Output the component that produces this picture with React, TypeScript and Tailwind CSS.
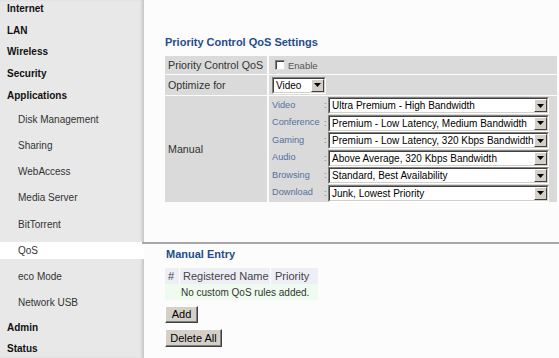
import React from 'react';

type NavItem = { label: string; sub?: boolean; active?: boolean; h: string };

const nav: NavItem[] = [
  { label: 'Internet', h: 'h-[22px]' },
  { label: 'LAN', h: 'h-[22px]' },
  { label: 'Wireless', h: 'h-[21px]' },
  { label: 'Security', h: 'h-[22px]' },
  { label: 'Applications', h: 'h-[22px]' },
  { label: 'Disk Management', sub: true, h: 'h-[26.25px]' },
  { label: 'Sharing', sub: true, h: 'h-[26.25px]' },
  { label: 'WebAccess', sub: true, h: 'h-[26.25px]' },
  { label: 'Media Server', sub: true, h: 'h-[26.25px]' },
  { label: 'BitTorrent', sub: true, h: 'h-[26.25px]' },
  { label: 'QoS', sub: true, active: true, h: 'h-[26.25px]' },
  { label: 'eco Mode', sub: true, h: 'h-[26.25px]' },
  { label: 'Network USB', sub: true, h: 'h-[26.25px]' },
  { label: 'Admin', h: 'h-[22px]' },
  { label: 'Status', h: 'h-[21px]' },
];

const manual = [
  ['Video', 'Ultra Premium - High Bandwidth'],
  ['Conference', 'Premium - Low Latency, Medium Bandwidth'],
  ['Gaming', 'Premium - Low Latency, 320 Kbps Bandwidth'],
  ['Audio', 'Above Average, 320 Kbps Bandwidth'],
  ['Browsing', 'Standard, Best Availability'],
  ['Download', 'Junk, Lowest Priority'],
];

const Arrow = () => (
  <span className="flex h-full w-[13px] shrink-0 items-center justify-center border-t border-l border-t-white border-l-white border-r border-b border-r-[#404040] border-b-[#404040] bg-[#d4d0c8]">
    <svg width="7" height="4" viewBox="0 0 7 4">
      <path d="M0 0h7L3.5 4z" fill="#000" />
    </svg>
  </span>
);

const Select = ({ value, className }: { value: string; className: string }) => (
  <div
    className={`flex items-stretch border border-t-[#808080] border-l-[#808080] border-r-white border-b-white bg-white ${className}`}
  >
    <div className="flex min-w-0 flex-1 items-stretch border border-t-[#404040] border-l-[#404040] border-r-[#d4d0c8] border-b-[#d4d0c8]">
      <span className="flex-1 truncate pl-[2px] text-[10px] leading-[13px] text-black">{value}</span>
      <Arrow />
    </div>
  </div>
);

const Btn = ({ label, className }: { label: string; className: string }) => (
  <button
    className={`flex items-center justify-center border border-t-white border-l-white border-r-[#404040] border-b-[#404040] bg-[#d4d0c8] text-[11px] text-black shadow-[inset_-1px_-1px_0_#808080] ${className}`}
  >
    {label}
  </button>
);

export default function App() {
  return (
    <div className="flex h-[358px] w-[559px] overflow-hidden bg-[#fcfcfc] font-['Liberation_Sans',Arial,sans-serif]">
      <aside className="w-[144px] shrink-0 bg-[#e8e8e8] shadow-[inset_-3px_0_3px_-1px_#c4c4c4]">
        <div className="-mt-[3px]">
          {nav.map((item) => (
            <div key={item.label} className={`flex items-center ${item.h}`}>
              {item.sub ? (
                <div
                  className={`flex h-[17px] w-full items-center pl-[18px] text-[10px] text-[#333] ${
                    item.active ? 'w-[149px] bg-white' : ''
                  }`}
                >
                  {item.label}
                </div>
              ) : (
                <div className="pl-[7px] text-[10px] font-bold text-[#111]">{item.label}</div>
              )}
            </div>
          ))}
        </div>
      </aside>

      <main className="flex-1 pt-[35px]">
        <div className="pl-[21px]">
          <h1 className="h-[14px] text-[11px] font-bold leading-[14px] text-[#244c8c]">
            Priority Control QoS Settings
          </h1>

          <div className="mt-[7px] grid w-[388px] grid-cols-[102px_1fr] grid-rows-[18px_20px_106px] gap-x-[2px] gap-y-[1px] text-[10.7px] text-[#333]">
            <div className="flex items-center bg-[#dadada] pl-[3px]">Priority Control QoS</div>
            <div className="flex items-center bg-[#dadada] pl-[6px]">
              <span className="h-[10px] w-[10px] border border-t-[#808080] border-l-[#808080] border-r-[#e0e0e0] border-b-[#e0e0e0] bg-white shadow-[inset_1px_1px_0_#404040]" />
              <span className="ml-[3px] mt-[2px] text-[9.5px] text-[#555]">Enable</span>
            </div>

            <div className="flex items-center bg-[#dadada] pl-[3px]">Optimize for</div>
            <div className="flex items-center bg-[#dadada] pl-[3px]">
              <Select value="Video" className="h-[17px] w-[54px]" />
            </div>

            <div className="flex items-center bg-[#dadada] pl-[3px]">Manual</div>
            <div className="flex flex-col bg-[#dadada] pt-[1px] pl-[3px] pr-[8px]">
              {manual.map(([k, v]) => (
                <div key={k} className="flex h-[17.5px] items-center">
                  <span className="w-[52px] text-[9.2px] text-[#54709c]">{k}</span>
                  <span className="w-[4px] text-[9px] text-[#777]">:</span>
                  <Select value={v} className="h-[17px] flex-1" />
                </div>
              ))}
            </div>
          </div>
        </div>

        <div className="ml-[-2px] mt-[40px] h-[2px] bg-[#a6a6a6] pl-[21px]" />

        <div className="pl-[21px]">
          <h2 className="mt-[3px] h-[14px] pl-[1px] text-[11px] font-bold leading-[14px] text-[#244c8c]">
            Manual Entry
          </h2>

          <div className="mt-[7px] w-[153px]">
            <div className="flex h-[16px] items-center bg-[#eeeef6] text-[11px] text-[#444]">
              <span className="w-[14px] pl-[3px]">#</span>
              <span className="w-[91px] border-l border-white pl-[3px]">Registered Name</span>
              <span className="flex-1 border-l border-white pl-[4px]">Priority</span>
            </div>
            <div className="flex h-[16px] items-center bg-[#effbef] pl-[16px] text-[10px] text-[#333]">
              No custom QoS rules added.
            </div>
          </div>

          <Btn label="Add" className="mt-[6px] h-[17px] w-[33px]" />
          <Btn label="Delete All" className="mt-[6px] h-[18px] w-[57px]" />
        </div>
      </main>
    </div>
  );
}
